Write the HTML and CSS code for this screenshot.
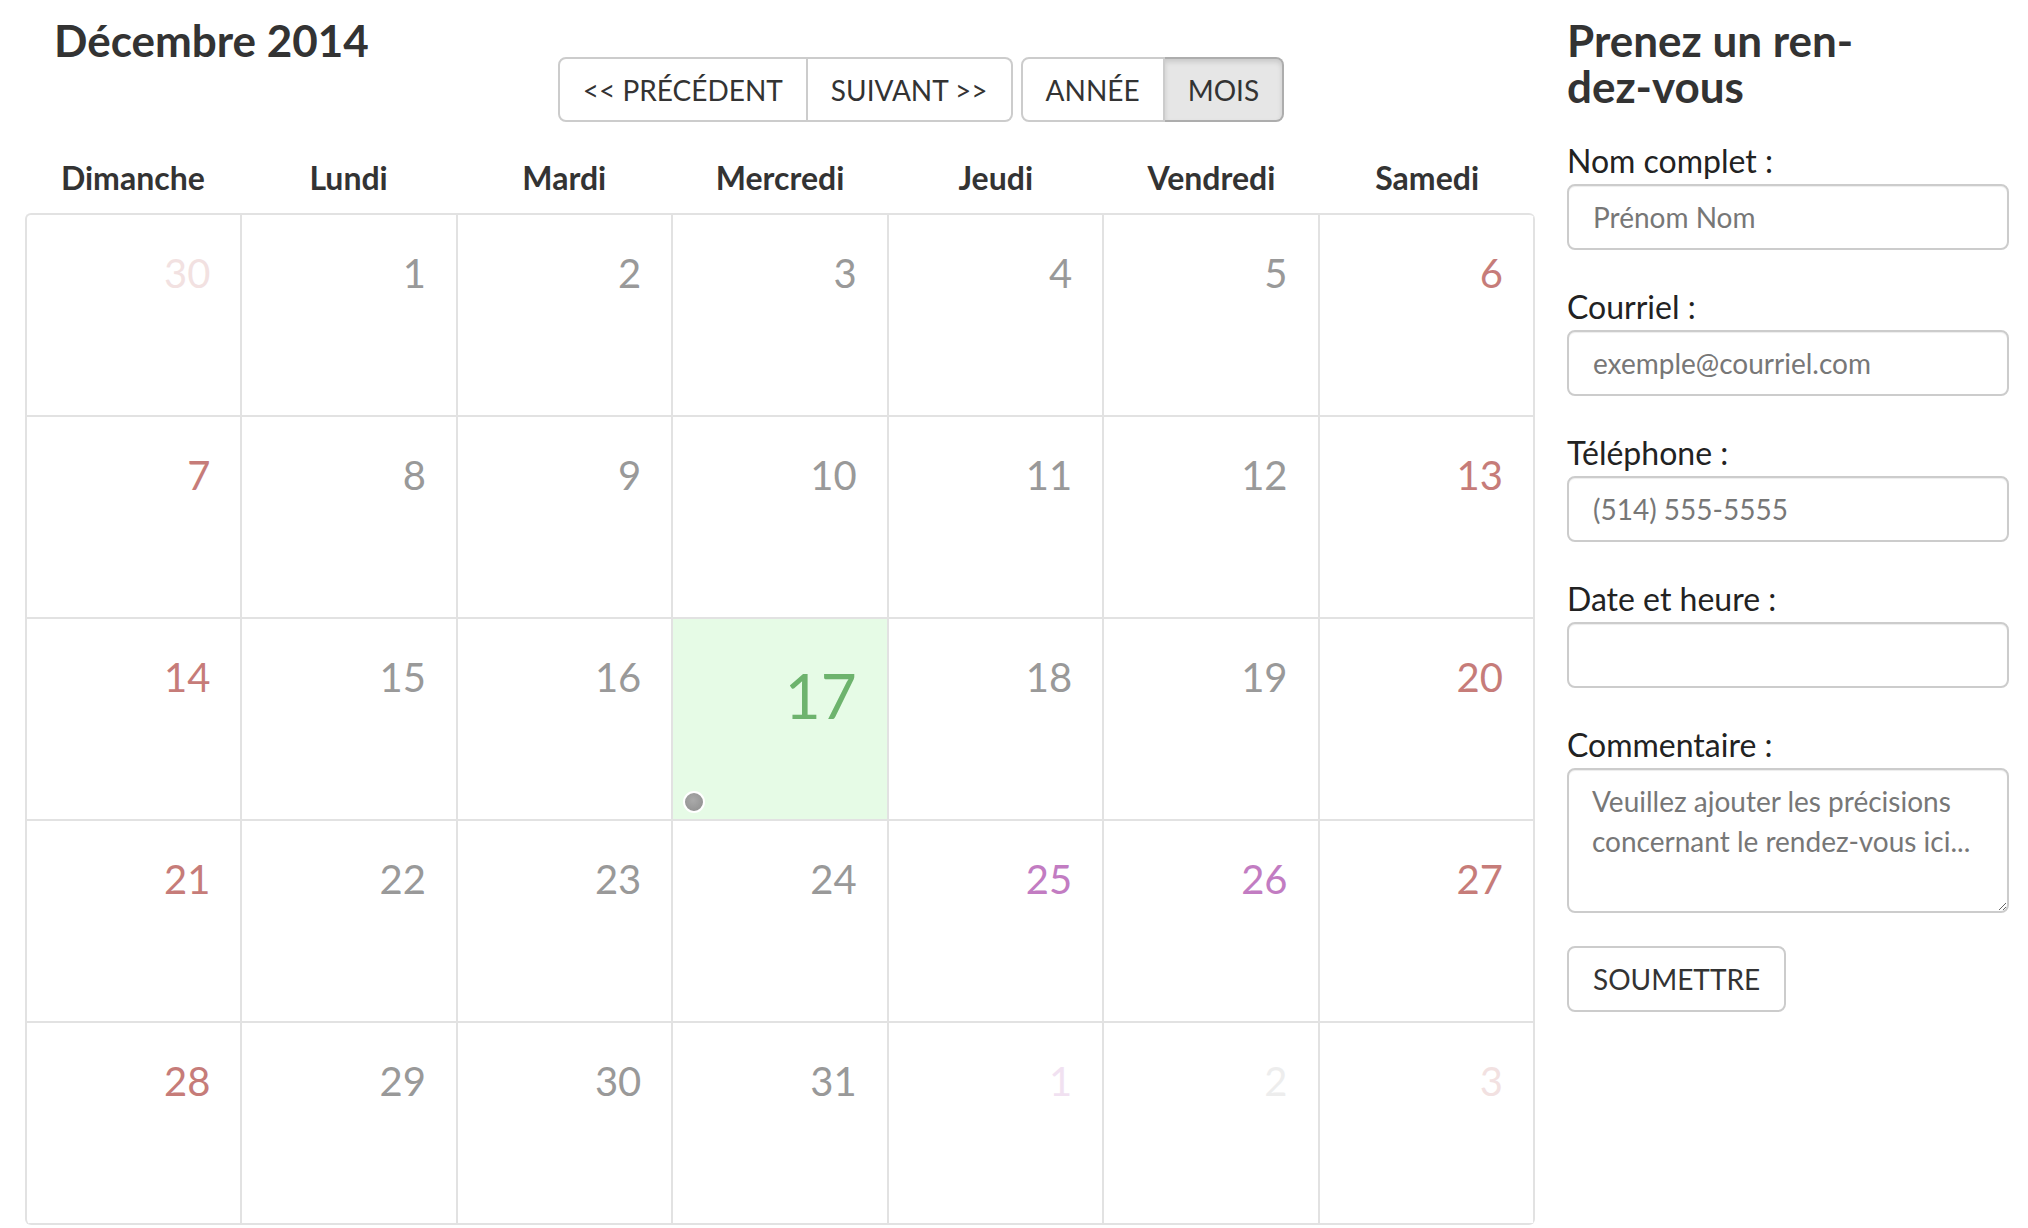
FILE: index.html
```html
<!DOCTYPE html>
<html lang="fr">
<head>
<meta charset="utf-8">
<title>Calendrier</title>
<link rel="stylesheet" href="styles.css">
</head>
<body>
<div class="page">
  <section class="calendar">
    <div class="toolbar">
      <h1 class="title">Décembre 2014</h1>
      <div class="btn-groups">
        <div class="btn-group">
          <button class="btn">&lt;&lt; PRÉCÉDENT</button>
          <button class="btn">SUIVANT &gt;&gt;</button>
        </div>
        <div class="btn-group">
          <button class="btn">ANNÉE</button>
          <button class="btn active">MOIS</button>
        </div>
      </div>
    </div>
    <div class="dow">
      <div>Dimanche</div><div>Lundi</div><div>Mardi</div><div>Mercredi</div><div>Jeudi</div><div>Vendredi</div><div>Samedi</div>
    </div>
    <div class="grid">
      <div class="cell other weekend"><span class="num">30</span></div>
      <div class="cell"><span class="num">1</span></div>
      <div class="cell"><span class="num">2</span></div>
      <div class="cell"><span class="num">3</span></div>
      <div class="cell"><span class="num">4</span></div>
      <div class="cell"><span class="num">5</span></div>
      <div class="cell weekend"><span class="num">6</span></div>

      <div class="cell weekend"><span class="num">7</span></div>
      <div class="cell"><span class="num">8</span></div>
      <div class="cell"><span class="num">9</span></div>
      <div class="cell"><span class="num">10</span></div>
      <div class="cell"><span class="num">11</span></div>
      <div class="cell"><span class="num">12</span></div>
      <div class="cell weekend"><span class="num">13</span></div>

      <div class="cell weekend"><span class="num">14</span></div>
      <div class="cell"><span class="num">15</span></div>
      <div class="cell"><span class="num">16</span></div>
      <div class="cell today"><span class="num">17</span><span class="dot"></span></div>
      <div class="cell"><span class="num">18</span></div>
      <div class="cell"><span class="num">19</span></div>
      <div class="cell weekend"><span class="num">20</span></div>

      <div class="cell weekend"><span class="num">21</span></div>
      <div class="cell"><span class="num">22</span></div>
      <div class="cell"><span class="num">23</span></div>
      <div class="cell"><span class="num">24</span></div>
      <div class="cell holiday"><span class="num">25</span></div>
      <div class="cell holiday"><span class="num">26</span></div>
      <div class="cell weekend"><span class="num">27</span></div>

      <div class="cell weekend"><span class="num">28</span></div>
      <div class="cell"><span class="num">29</span></div>
      <div class="cell"><span class="num">30</span></div>
      <div class="cell"><span class="num">31</span></div>
      <div class="cell other holiday"><span class="num">1</span></div>
      <div class="cell other"><span class="num">2</span></div>
      <div class="cell other weekend"><span class="num">3</span></div>
    </div>
  </section>

  <aside class="sidebar">
    <h2 class="form-title">Prenez un ren-<br>dez-vous</h2>
    <form class="form">
      <div class="field">
        <label for="nom">Nom complet :</label>
        <input id="nom" type="text" placeholder="Prénom Nom">
      </div>
      <div class="field">
        <label for="mail">Courriel :</label>
        <input id="mail" type="text" placeholder="exemple@courriel.com">
      </div>
      <div class="field">
        <label for="tel">Téléphone :</label>
        <input id="tel" type="text" placeholder="(514) 555-5555">
      </div>
      <div class="field">
        <label for="date">Date et heure :</label>
        <input id="date" type="text">
      </div>
      <div class="field field-last">
        <label for="com">Commentaire :</label>
        <textarea id="com" placeholder="Veuillez ajouter les précisions concernant le rendez-vous ici..."></textarea>
      </div>
      <button type="button" class="btn submit">SOUMETTRE</button>
    </form>
  </aside>
</div>
</body>
</html>
```

FILE: styles.css
```css
* { box-sizing: border-box; }

html, body {
  margin: 0;
  padding: 0;
  background: #fff;
}

body {
  font-family: Lato, "Open Sans", "Liberation Sans", sans-serif;
  color: #333;
}

.page {
  display: flex;
  gap: 32px;
  padding: 0 19px 0 25px;
}

.calendar {
  width: 1510px;
  flex: none;
}

.toolbar {
  display: flex;
  align-items: flex-start;
  height: 122px;
}

.title {
  margin: 14px 0 0 29px;
  font-size: 44px;
  font-weight: 700;
  line-height: 1.2;
  color: #333;
}

.btn-groups {
  display: flex;
  gap: 8px;
  margin: 57px 0 0 189px;
}

.btn-group {
  display: flex;
}

.btn {
  font-family: Lato, "Open Sans", "Liberation Sans", sans-serif;
  font-size: 28px;
  color: #333;
  background: #fff;
  border: 2px solid #ccc;
  height: 65px;
  padding: 0 23px;
  margin: 0;
  cursor: pointer;
}

.btn-group .btn:first-child {
  border-radius: 8px 0 0 8px;
}

.btn-group .btn:last-child {
  border-radius: 0 8px 8px 0;
  border-left: none;
}

.btn.active {
  background: #e6e6e6;
  border-color: #adadad;
  box-shadow: inset 0 3px 5px rgba(0, 0, 0, 0.125);
}

.dow {
  display: grid;
  grid-template-columns: repeat(7, 1fr);
  margin-top: 37px;
  padding-bottom: 16px;
  font-size: 32px;
  font-weight: 700;
  line-height: 38px;
  text-align: center;
  color: #333;
}

.grid {
  display: grid;
  grid-template-columns: repeat(7, 1fr);
  grid-auto-rows: 202px;
  border-top: 2px solid #e2e2e2;
  border-left: 2px solid #e2e2e2;
  border-radius: 6px;
  overflow: hidden;
}

.cell {
  position: relative;
  border-right: 2px solid #e2e2e2;
  border-bottom: 2px solid #e2e2e2;
  padding: 34px 30px 0 0;
  text-align: right;
}

.num {
  font-size: 40px;
  line-height: 1.2;
  color: #999;
}

.weekend .num { color: #c67c79; }
.holiday .num { color: #c27cc2; }
.other .num { opacity: 0.22; }
.other:not(.weekend):not(.holiday) .num { opacity: 0.2; color: #aaa; }

.today {
  background: #e6fbe6;
  padding-top: 39px;
}

.today .num {
  font-size: 62px;
  color: #6db36d;
}

.dot {
  position: absolute;
  left: 10px;
  bottom: 6px;
  width: 22px;
  height: 22px;
  border-radius: 50%;
  border: 2px solid #fff;
  background: radial-gradient(circle at 45% 40%, #aaa, #8c8c8c);
}

.sidebar {
  width: 442px;
  flex: none;
}

.form-title {
  margin: 17px 0 0;
  font-size: 44px;
  font-weight: 700;
  line-height: 46px;
  color: #333;
}

.form {
  margin-top: 32px;
}

.field {
  display: flex;
  flex-direction: column;
  margin-bottom: 37px;
}

.field-last {
  margin-bottom: 33px;
}

.field label {
  font-size: 32px;
  line-height: 40px;
  margin-bottom: 3px;
  color: #222;
}

.field input,
.field textarea {
  font-family: Lato, "Open Sans", "Liberation Sans", sans-serif;
  font-size: 28px;
  color: #555;
  width: 100%;
  border: 2px solid #ccc;
  border-radius: 8px;
  background: #fff;
  box-shadow: inset 0 1px 1px rgba(0, 0, 0, 0.075);
}

.field input {
  height: 66px;
  padding: 0 24px;
}

.field textarea {
  height: 145px;
  padding: 11px 23px;
  line-height: 40px;
  resize: vertical;
}

.field input::placeholder,
.field textarea::placeholder {
  color: #777;
  opacity: 1;
}

.submit {
  font-size: 28px;
  height: 66px;
  padding: 0 24px;
  border-radius: 8px;
}
```
